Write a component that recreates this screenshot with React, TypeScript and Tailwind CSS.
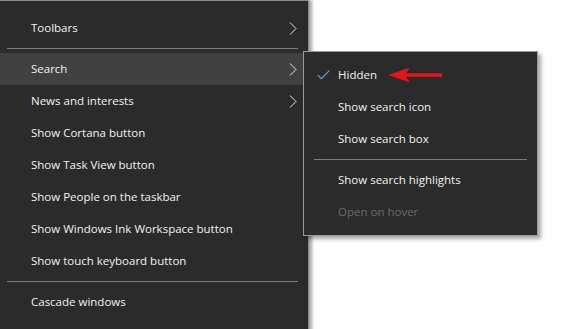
import React from "react";

const Chevron = () => (
  <svg width="8" height="13" viewBox="0 0 8 13" className="block">
    <path d="M1 0.5 L7 6.5 L1 12.5" fill="none" stroke="#e6e6e6" strokeWidth="1" />
  </svg>
);

type Item = { label: string; sub?: boolean; hover?: boolean };

const MainRow = ({ label, sub, hover }: Item) => (
  <div
    className={`flex h-[32px] items-center justify-between pl-[31px] pr-[11px] ${
      hover ? "bg-[#414141]" : ""
    }`}
  >
    <span>{label}</span>
    {sub ? <Chevron /> : null}
  </div>
);

const Sep = ({ className }: { className: string }) => (
  <div className={`flex h-[9px] items-center ${className}`}>
    <div className="h-px w-full bg-[#7d7d7d]" />
  </div>
);

export default function App() {
  return (
    <div
      className="relative h-[329px] w-[580px] overflow-hidden bg-white text-[11.5px] text-[#f2f2f2]"
      style={{ fontFamily: '"Open Sans", "Noto Sans", sans-serif' }}
    >
      <div className="h-[340px] w-[309px] border-t border-r border-[#8a8a8a] bg-[#2b2b2b] pt-[11px] shadow-[3px_0_3px_rgba(0,0,0,0.35)]">
        <MainRow label="Toolbars" sub />
        <Sep className="pl-[7px] pr-[10px]" />
        <MainRow label="Search" sub hover />
        <MainRow label="News and interests" sub />
        <MainRow label="Show Cortana button" />
        <MainRow label="Show Task View button" />
        <MainRow label="Show People on the taskbar" />
        <MainRow label="Show Windows Ink Workspace button" />
        <MainRow label="Show touch keyboard button" />
        <Sep className="pl-[7px] pr-[10px]" />
        <MainRow label="Cascade windows" />
      </div>

      <div className="absolute left-[303px] top-[51px] w-[235px] border border-[#9b9b9b] bg-[#2b2b2b] py-[7px] shadow-[3px_3px_4px_rgba(0,0,0,0.35)]">
        <div className="flex h-[32px] items-center">
          <div className="flex w-[34px] justify-end pr-[8px]">
            <svg width="13" height="10" viewBox="0 0 13 10">
              <path d="M0.8 5.2 L4.3 8.7 L12.3 0.7" fill="none" stroke="#5aa0e6" strokeWidth="1.2" />
            </svg>
          </div>
          <span>Hidden</span>
        </div>
        <div className="flex h-[32px] items-center pl-[34px]">Show search icon</div>
        <div className="flex h-[32px] items-center pl-[34px]">Show search box</div>
        <Sep className="pl-[10px] pr-[10px]" />
        <div className="flex h-[32px] items-center pl-[34px]">Show search highlights</div>
        <div className="flex h-[32px] items-center pl-[34px] text-[#6b6b6b]">Open on hover</div>
      </div>

      <svg
        className="absolute left-[386px] top-[66px]"
        width="60"
        height="18"
        viewBox="0 0 60 18"
      >
        <path
          d="M2 9 L24 1.5 L20 7.2 L56 7.2 L56 10.8 L20 10.8 L24 16.5 Z"
          fill="#e8141b"
        />
      </svg>
    </div>
  );
}
